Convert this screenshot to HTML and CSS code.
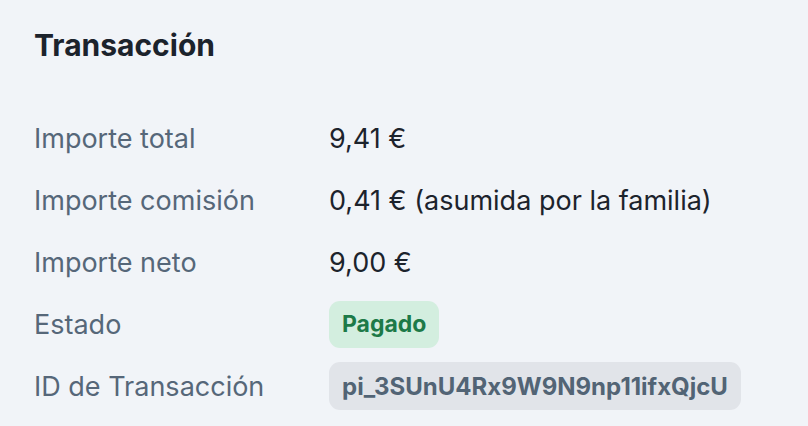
FILE: index.html
```html
<!DOCTYPE html>
<html lang="es">
<head>
<meta charset="utf-8">
<link rel="stylesheet" href="styles.css">
</head>
<body>
<section class="card">
  <h2 class="title">Transacción</h2>
  <dl class="details">
    <dt>Importe total</dt><dd>9,41 €</dd>
    <dt>Importe comisión</dt><dd>0,41 € (asumida por la familia)</dd>
    <dt>Importe neto</dt><dd>9,00 €</dd>
    <dt>Estado</dt><dd><span class="badge">Pagado</span></dd>
    <dt>ID de Transacción</dt><dd><span class="code">pi_3SUnU4Rx9W9N9np11ifxQjcU</span></dd>
  </dl>
</section>
</body>
</html>
```
FILE: styles.css
```css
html, body {
  margin: 0;
  padding: 0;
  background: #f1f4f8;
}
body {
  font-family: Inter, "Noto Sans", sans-serif;
  color: #1c232c;
}
.card {
  padding: 25px 34px 0 34px;
}
.title {
  margin: 0;
  font-size: 30px;
  font-weight: 700;
  line-height: 40px;
  color: #1c232c;
}
.details {
  margin: 49px 0 0 0;
  display: grid;
  grid-template-columns: 295px 1fr;
  grid-auto-rows: 48px;
  row-gap: 14px;
  align-items: center;
}
.details dt {
  font-size: 27px;
  color: #566779;
}
.details dd {
  margin: 0;
  font-size: 27px;
  color: #1c232c;
}
.badge {
  display: inline-flex;
  align-items: center;
  height: 47px;
  padding: 0 13px;
  border-radius: 11px;
  background: #d3eedf;
  color: #1d7a48;
  font-weight: 700;
  font-size: 23px;
}
.code {
  display: inline-flex;
  align-items: center;
  height: 48px;
  padding: 0 13px;
  border-radius: 11px;
  background: #e1e4e9;
  color: #526475;
  font-weight: 700;
  font-size: 24px;
}
```
